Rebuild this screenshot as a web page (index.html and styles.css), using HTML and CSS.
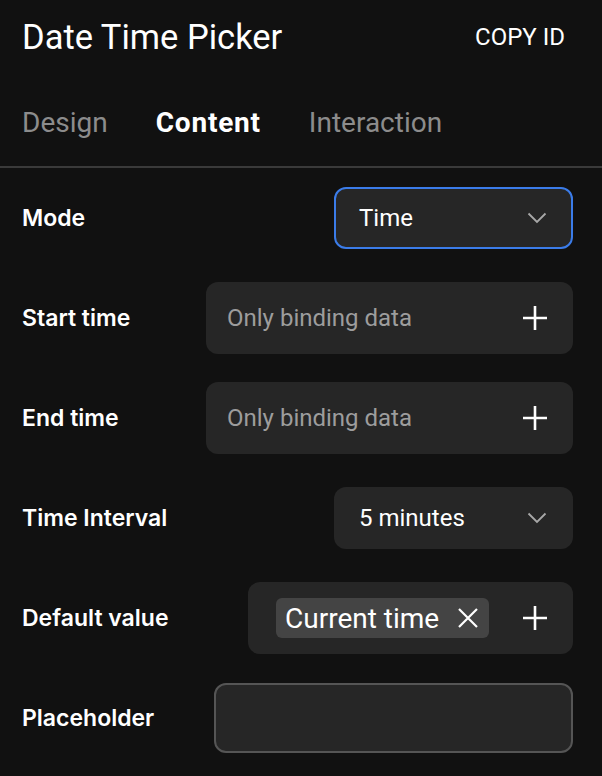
FILE: index.html
```html
<!DOCTYPE html>
<html>
<head>
<meta charset="utf-8">
<link rel="stylesheet" href="styles.css">
</head>
<body>
<div class="panel">
  <header class="head">
    <h1 class="title">Date Time Picker</h1>
    <span class="copy">COPY ID</span>
  </header>
  <nav class="tabs">
    <span class="tab">Design</span>
    <span class="tab active">Content</span>
    <span class="tab">Interaction</span>
  </nav>
  <div class="rows">
    <div class="row">
      <span class="label">Mode</span>
      <div class="box select focus">
        <span class="value">Time</span>
        <svg class="chev" width="20" height="12" viewBox="0 0 20 12"><path d="M1.5 1.5 L10 10 L18.5 1.5" fill="none" stroke="#a8a8a8" stroke-width="1.8"/></svg>
      </div>
    </div>
    <div class="row">
      <span class="label">Start time</span>
      <div class="box bind wide">
        <span class="ph">Only binding data</span>
        <svg class="plus" width="26" height="26" viewBox="0 0 26 26"><path d="M13 1 V25 M1 13 H25" stroke="#fff" stroke-width="2.6"/></svg>
      </div>
    </div>
    <div class="row">
      <span class="label">End time</span>
      <div class="box bind wide">
        <span class="ph">Only binding data</span>
        <svg class="plus" width="26" height="26" viewBox="0 0 26 26"><path d="M13 1 V25 M1 13 H25" stroke="#fff" stroke-width="2.6"/></svg>
      </div>
    </div>
    <div class="row">
      <span class="label">Time Interval</span>
      <div class="box select">
        <span class="value">5 minutes</span>
        <svg class="chev" width="20" height="12" viewBox="0 0 20 12"><path d="M1.5 1.5 L10 10 L18.5 1.5" fill="none" stroke="#a8a8a8" stroke-width="1.8"/></svg>
      </div>
    </div>
    <div class="row">
      <span class="label">Default value</span>
      <div class="box bind def">
        <span class="tag">Current time
          <svg class="x" width="22" height="22" viewBox="0 0 22 22"><path d="M2 2 L20 20 M20 2 L2 20" stroke="#fff" stroke-width="2.2"/></svg>
        </span>
        <svg class="plus" width="26" height="26" viewBox="0 0 26 26"><path d="M13 1 V25 M1 13 H25" stroke="#fff" stroke-width="2.6"/></svg>
      </div>
    </div>
    <div class="row">
      <span class="label">Placeholder</span>
      <div class="box input"></div>
    </div>
  </div>
</div>
</body>
</html>
```

FILE: styles.css
```css
* { box-sizing: border-box; }
html, body { margin: 0; padding: 0; background: #111111; }
body { width: 602px; height: 776px; overflow: hidden; font-family: Roboto, "Liberation Sans", sans-serif; color: #fff; }
.panel { display: flex; flex-direction: column; }
.head { display: flex; justify-content: space-between; align-items: center; padding: 0 37px 0 22px; height: 74px; }
.title { margin: 0; font-size: 34.5px; font-weight: 400; line-height: 40px; }
.copy { font-size: 24px; font-weight: 400; }
.tabs { display: flex; gap: 48px; padding: 4px 22px 0; height: 94px; align-items: center; border-bottom: 2px solid #3a3a3a; }
.tab { font-size: 28px; color: #8c8c8c; }
.tab.active { color: #fff; font-weight: 700; letter-spacing: 0.8px; }
.rows { display: flex; flex-direction: column; padding: 0 29px 0 22px; }
.row { height: 100px; display: flex; align-items: center; justify-content: space-between; }
.label { font-family: Inter, "Noto Sans", sans-serif; font-weight: 600; font-size: 23px; }
.box { background: #262626; border-radius: 12px; display: flex; align-items: center; }
.select { width: 239px; height: 62px; padding: 0 26px 0 25px; justify-content: space-between; }
.select.focus { border: 2px solid #3b7ce9; padding-left: 23px; padding-right: 24px; }
.value { font-size: 24px; }
.bind { height: 72px; padding: 0 25px 0 21px; justify-content: space-between; }
.wide { width: 367px; }
.ph { font-size: 24px; color: #9d9d9d; }
.def { width: 325px; padding-left: 28px; }
.tag { display: flex; align-items: center; gap: 18px; background: #444; border-radius: 6px; height: 40px; padding: 0 10px 0 9px; font-size: 28px; }
.input { width: 359px; height: 70px; border: 2px solid #555; }
```
